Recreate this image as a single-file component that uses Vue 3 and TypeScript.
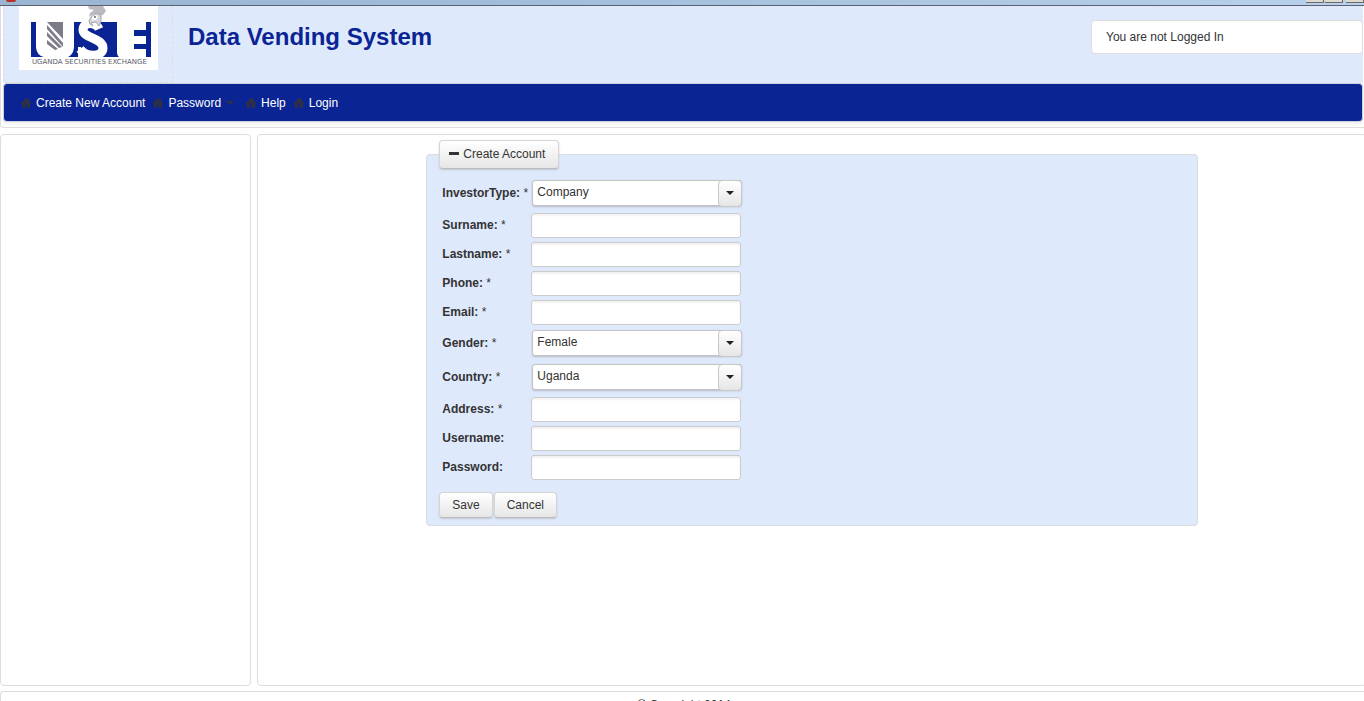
<script setup lang="ts">
import { reactive, ref } from 'vue'

interface Field {
  id: string
  label: string
  required: boolean
  type: 'text' | 'password' | 'email' | 'tel' | 'select'
  options?: string[]
}

const fields: Field[] = [
  { id: 'investorType', label: 'InvestorType:', required: true, type: 'select', options: ['Company', 'Individual'] },
  { id: 'surname', label: 'Surname:', required: true, type: 'text' },
  { id: 'lastname', label: 'Lastname:', required: true, type: 'text' },
  { id: 'phone', label: 'Phone:', required: true, type: 'tel' },
  { id: 'email', label: 'Email:', required: true, type: 'email' },
  { id: 'gender', label: 'Gender:', required: true, type: 'select', options: ['Female', 'Male'] },
  { id: 'country', label: 'Country:', required: true, type: 'select', options: ['Uganda', 'Kenya', 'Tanzania'] },
  { id: 'address', label: 'Address:', required: true, type: 'text' },
  { id: 'username', label: 'Username:', required: false, type: 'text' },
  { id: 'password', label: 'Password:', required: false, type: 'password' },
]

const blank = (): Record<string, string> =>
  Object.fromEntries(fields.map((f) => [f.id, f.options ? f.options[0] : '']))

const form = reactive<Record<string, string>>(blank())
const open = ref(true)

const menu = [
  { label: 'Create New Account', submenu: false },
  { label: 'Password', submenu: true },
  { label: 'Help', submenu: false },
  { label: 'Login', submenu: false },
]

function reset(): void {
  Object.assign(form, blank())
}
</script>

<template>
  <div class="page">
    <div class="titlebar">
      <span class="app-dot"></span>
      <span class="window-buttons"><i></i><i></i><i class="close"></i></span>
    </div>

    <header class="top">
      <div class="banner">
        <div class="logo-panel">
          <svg class="logo" viewBox="0 0 139 64" role="img" aria-label="Uganda Securities Exchange">
            <rect width="139" height="64" fill="#fff" />
            <g fill="#0a2494">
              <path d="M12 16h5v24c0 6 3 10 8 11H12z" />
              <path d="M55 16h43v30c0 3 1 4 2 5H49c4-2 6-6 6-11z" />
              <path d="M127 16h5v35h-17v-1c3 0 5-2 5-4v-3h-5v-5h12v-8h-12v-6h12z" />
            </g>
            <path d="M115 43h12v8h-12z" fill="#fff" />
            <path d="M63 14h18v8H68z" fill="#fff" />
            <path d="M80 23C77 16 64 15 64 24C64 32 84 32 84 42C84 51 68 52 61 43" fill="none" stroke="#fff" stroke-width="9" />
            <path d="M59 41h3v11h-3zM62 50l4-1 5 3h-9z" fill="#fff" />
            <path d="M28 16h16v17z" fill="#7b7c87" />
            <path d="M28 19l16 18v4L28 23zM28 26l15 15-3 1-12-12zM28 34l11 9-3 1-8-6z" fill="#7b7c87" />
            <path d="M69 0h15l3 5-3 4h-5l-4-1-5 3 1-4 4-3-5-1z" fill="#b9bbc1" />
            <path d="M72 11l5-4 5 2v6l-2 5-3-4-5 1 2 3-3-2-1-3z" fill="#d6d7dc" stroke="#a2a4ac" stroke-width="1" />
            <path d="M73 11l4-2 2 2-2 3h-4z" fill="#fff" />
            <circle cx="76" cy="11" r="1" fill="#63656e" />
            <text x="13" y="58" class="logo-text">UGANDA SECURITIES EXCHANGE</text>
          </svg>
        </div>
        <h1>Data Vending System</h1>
        <div class="status">You are not Logged In</div>
      </div>

      <nav class="menu">
        <a v-for="item in menu" :key="item.label" href="#">
          <svg class="home" viewBox="0 0 10 10" aria-hidden="true">
            <path d="M4 0h1v1h2V0h1v3l2 2v1H9v4H6V7H4v3H1V6H0V5l4-4z" fill="#2d3142" />
            <path d="M3 4h1v1H3zM6 4h1v1H6z" fill="#0a2494" />
          </svg>
          <span>{{ item.label }}</span>
          <svg v-if="item.submenu" class="caret" viewBox="0 0 8 4" aria-hidden="true">
            <path d="M0 0h8L4 4z" fill="#2d3142" />
          </svg>
        </a>
      </nav>
    </header>

    <main class="body">
      <aside class="panel side"></aside>
      <section class="panel content">
        <form @submit.prevent>
          <fieldset class="account">
            <legend>
              <button type="button" class="btn toggle" :aria-expanded="open" @click="open = !open">
                <span class="minus"></span>Create Account
              </button>
            </legend>
            <template v-if="open">
              <div class="grid">
                <div v-for="f in fields" :key="f.id" class="row" :class="{ tall: f.type === 'select' }">
                  <label :for="f.id">{{ f.label }}<span v-if="f.required" class="star"> *</span></label>
                  <div v-if="f.type === 'select'" class="select">
                    <select :id="f.id" v-model="form[f.id]">
                      <option v-for="o in f.options" :key="o">{{ o }}</option>
                    </select>
                    <span class="trigger">
                      <svg viewBox="0 0 8 4" aria-hidden="true"><path d="M0 0h8L4 4z" fill="#222" /></svg>
                    </span>
                  </div>
                  <input v-else :id="f.id" v-model="form[f.id]" :type="f.type" />
                </div>
              </div>
              <div class="actions">
                <button type="submit" class="btn">Save</button>
                <button type="button" class="btn" @click="reset">Cancel</button>
              </div>
            </template>
          </fieldset>
        </form>
      </section>
    </main>

    <footer class="foot">© Copyright 2014</footer>
  </div>
</template>

<style>
body {
  margin: 0;
  background: #fff;
}
</style>

<style scoped>
.page,
.page * {
  box-sizing: border-box;
}
.page {
  display: flex;
  flex-direction: column;
  height: 100vh;
  overflow: hidden;
  color: #333;
  font-family: "Liberation Sans", Arial, sans-serif;
  font-size: 12px;
  line-height: 16px;
}
.titlebar {
  display: flex;
  flex: none;
  justify-content: space-between;
  align-items: flex-start;
  height: 6px;
  padding-left: 6px;
  border-bottom: 1px solid #5d6070;
  background: linear-gradient(90deg, #9ab5d2, #a0bcd8 35%, #b8d1ec);
}
.app-dot {
  width: 10px;
  height: 2px;
  border-radius: 0 0 5px 5px;
  background: #b5302a;
}
.window-buttons {
  display: flex;
  gap: 1px;
}
.window-buttons i {
  width: 18px;
  height: 3px;
  border: solid #6b6b66;
  border-width: 0 1px 1px 0;
  background: #dedad2;
}
.window-buttons .close {
  margin-left: 2px;
}
.top {
  flex: none;
  margin-right: -3px;
  padding: 0 4px 5px 2px;
  border: solid #ddd;
  border-width: 0 0 1px 1px;
  border-radius: 0 0 0 4px;
}
.banner {
  display: flex;
  align-items: flex-start;
  height: 77px;
  background: #dfe9fc;
}
.logo-panel {
  width: 170px;
  height: 77px;
  padding-left: 15px;
  border: 1px dashed #ddd;
  border-top: 0;
  border-radius: 0 0 4px 4px;
}
.logo {
  display: block;
  width: 139px;
  height: 64px;
}
.logo-text {
  fill: #5c5d66;
  font: 7px "DejaVu Sans", sans-serif;
}
h1 {
  flex: 1;
  margin: 16px 0 0 15px;
  color: #0a2494;
  font-size: 24px;
  line-height: 30px;
}
.status {
  width: 20%;
  margin-top: 14px;
  padding: 8px 14px;
  border: 1px solid #ddd;
  border-radius: 4px;
  background: #fff;
}
.menu {
  display: flex;
  align-items: center;
  gap: 8px;
  height: 39px;
  padding-left: 17px;
  border: 1px solid #ccd2e0;
  border-radius: 4px;
  background: #0a2494;
  box-shadow: 0 2px 4px #eee;
}
.menu a {
  display: flex;
  align-items: center;
  gap: 5px;
  color: #fff;
  text-decoration: none;
}
.home {
  width: 10px;
  height: 10px;
}
.caret {
  width: 8px;
  height: 4px;
  margin-right: 4px;
}
.body {
  display: flex;
  flex: 1;
  gap: 6px;
  min-height: 0;
  margin: 6px -3px 5px 0;
}
.panel {
  border: 1px solid #ddd;
  border-radius: 4px;
}
.side {
  flex: none;
  width: 251px;
}
.content {
  flex: 1;
  padding: 5px 3px;
}
.account {
  width: 70%;
  min-width: 330px;
  margin: 0 auto;
  padding: 8px 12px 7px;
  border: 1px solid #ddd;
  border-radius: 4px;
  background: #dfe9fc;
}
legend {
  padding: 0;
}
.btn {
  height: 26px;
  padding: 0 12px;
  border: 1px solid #d6d6d6;
  border-bottom-color: #bbb;
  border-radius: 4px;
  background: linear-gradient(#fff, #e6e6e6);
  box-shadow: 0 1px 2px #bfc5d2;
  color: #333;
  font: inherit;
}
.toggle {
  display: flex;
  align-items: center;
  gap: 4px;
  height: 29px;
  padding: 0 13px 2px 9px;
}
.minus {
  width: 10px;
  height: 3px;
  background: #333;
}
.row {
  display: grid;
  grid-template-columns: 89px 211px;
  align-items: center;
  height: 29px;
  padding-left: 3px;
}
.row.tall {
  height: 34px;
  padding-bottom: 2px;
}
label {
  padding-bottom: 2px;
  font-weight: bold;
  white-space: nowrap;
}
.tall label {
  padding-bottom: 0;
}
.star {
  font-weight: normal;
}
input {
  width: 210px;
  height: 25px;
  padding: 4px;
  border: 1px solid #ccc;
  border-radius: 3px;
  background: #fff;
  box-shadow: inset 0 2px 2px #f2f2f2;
  color: inherit;
  font: inherit;
}
.select {
  position: relative;
  height: 26px;
  padding-left: 1px;
}
select {
  width: 100%;
  height: 26px;
  padding: 0 28px 2px 4px;
  border: 1px solid #c4c4c4;
  border-radius: 3px;
  appearance: none;
  background: #fff;
  box-shadow: 0 1px 2px #b5bac6;
  color: inherit;
  font: inherit;
}
.trigger {
  position: absolute;
  top: 0;
  right: 0;
  display: flex;
  align-items: center;
  justify-content: center;
  width: 24px;
  height: 27px;
  padding-bottom: 2px;
  border: 1px solid #c8c8c8;
  border-radius: 4px;
  background: linear-gradient(#fff, #e6e6e6);
  pointer-events: none;
}
.trigger svg {
  width: 8px;
  height: 4px;
}
.actions {
  display: flex;
  gap: 1px;
  margin-top: 10px;
}
.foot {
  flex: none;
  height: 10px;
  margin-right: -3px;
  padding-top: 5px;
  border: solid #ddd;
  border-width: 1px 0 0 1px;
  border-radius: 4px 0 0 0;
  text-align: center;
}
</style>
